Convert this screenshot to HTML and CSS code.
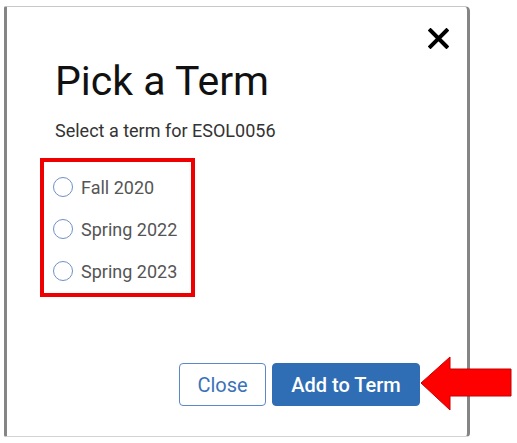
FILE: index.html
```html
<!DOCTYPE html>
<html>
<head>
<meta charset="utf-8">
<link rel="stylesheet" href="styles.css">
</head>
<body>
<div class="modal">
  <div class="modal-head">
    <button class="close-x" aria-label="Close">
      <svg width="21" height="21" viewBox="0 0 21 21"><path d="M2.5 2.5 L18.5 18.5 M18.5 2.5 L2.5 18.5" stroke="#000" stroke-width="4" stroke-linecap="square" fill="none"/></svg>
    </button>
  </div>
  <h1 class="title">Pick a Term</h1>
  <p class="subtitle">Select a term for ESOL0056</p>
  <div class="term-list">
    <label class="term"><span class="radio"></span><span class="term-name">Fall 2020</span></label>
    <label class="term"><span class="radio"></span><span class="term-name">Spring 2022</span></label>
    <label class="term"><span class="radio"></span><span class="term-name">Spring 2023</span></label>
  </div>
  <div class="actions">
    <button class="btn btn-outline">Close</button>
    <button class="btn btn-primary">Add to Term</button>
  </div>
</div>
<svg class="arrow" width="94" height="56" viewBox="0 0 94 56">
  <path d="M1 27 L30 1 L30 13 L91 13 L91 40 L30 40 L30 54 Z" fill="#ff0000" stroke="#c40000" stroke-width="1"/>
</svg>
</body>
</html>
```
FILE: styles.css
```css
html, body {
  margin: 0;
  padding: 0;
  background: #fff;
}
body {
  font-family: Roboto, "Liberation Sans", sans-serif;
  position: relative;
  width: 517px;
  height: 443px;
  overflow: hidden;
}
.modal {
  margin: 6px 0 0 4px;
  width: 466px;
  height: 431px;
  box-sizing: border-box;
  border-left: 3px solid #858585;
  border-right: 3px solid #858585;
  border-top: 1px solid #c8c8c8;
  border-bottom: 1px solid #d4d4d4;
  border-radius: 2px 5px 4px 2px;
  padding: 21px 0 30px 48px;
  display: flex;
  flex-direction: column;
}
.modal-head {
  display: flex;
  justify-content: flex-end;
  padding-right: 18px;
  height: 21px;
}
.close-x {
  border: 0;
  background: none;
  padding: 0;
  width: 21px;
  height: 21px;
  display: block;
}
.close-x svg { display: block; }
.title {
  margin: 8px 0 0;
  font-size: 41px;
  line-height: 48px;
  font-weight: 400;
  color: #111;
}
.subtitle {
  margin: 15px 0 0;
  font-size: 18px;
  line-height: 22px;
  color: #333;
}
.term-list {
  margin: 16px 0 0 -15px;
  width: 155px;
  box-sizing: border-box;
  border: 4px solid #ee0000;
  padding: 4px 0 1px 9px;
  display: flex;
  flex-direction: column;
}
.term {
  height: 42px;
  display: flex;
  align-items: center;
  gap: 8px;
}
.radio {
  width: 20px;
  height: 20px;
  box-sizing: border-box;
  border: 1.5px solid #6f90c6;
  border-radius: 50%;
  flex: none;
}
.term-name {
  font-size: 18px;
  color: #555;
}
.actions {
  margin-top: auto;
  display: flex;
  justify-content: flex-end;
  gap: 6px;
  padding-right: 47px;
}
.btn {
  height: 43px;
  box-sizing: border-box;
  border-radius: 4px;
  font-family: Roboto, "Liberation Sans", sans-serif;
  font-size: 20px;
  padding: 0;
}
.btn-outline {
  width: 87px;
  background: #fff;
  border: 1px solid #5b88c6;
  color: #3b72b8;
}
.btn-primary {
  width: 148px;
  background: #2f6db5;
  border: 1px solid #2f6db5;
  color: #fff;
  font-weight: 500;
}
.arrow {
  position: absolute;
  left: 420px;
  top: 356px;
}
```
